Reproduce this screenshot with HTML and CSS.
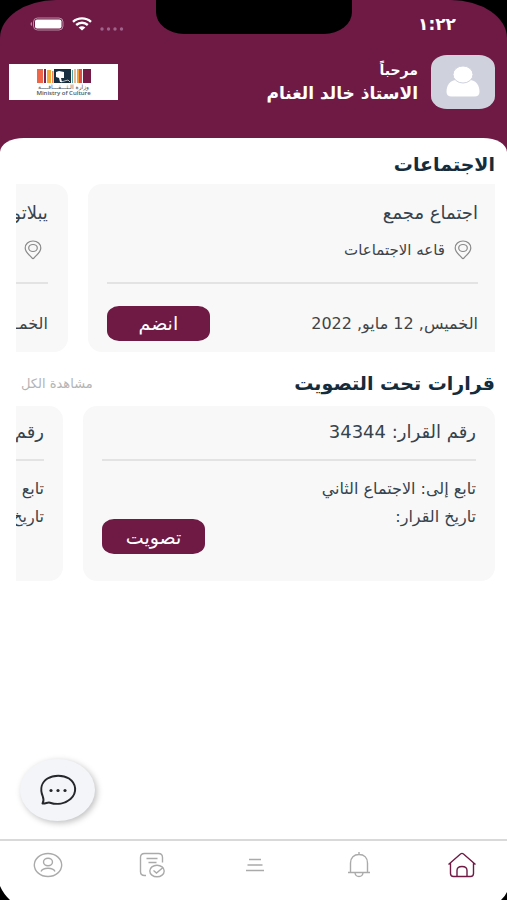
FILE: index.html
```html
<!DOCTYPE html>
<html lang="ar" dir="rtl">
<head>
<meta charset="utf-8">
<meta name="viewport" content="width=device-width, initial-scale=1">
<title>الاجتماعات</title>
<link rel="stylesheet" href="styles.css">
</head>
<body>
<div class="phone">
  <div class="notch"></div>
  <header class="top">
    <div class="status">
      <span class="time">١:٢٢</span>
      <span class="signals">
        <svg width="24" height="4" viewBox="0 0 24 4" fill="#a0648a"><circle cx="2" cy="2" r="1.700"/><circle cx="8.500" cy="2" r="1.700"/><circle cx="15" cy="2" r="1.700"/><circle cx="21.500" cy="2" r="1.700"/></svg>
        <svg width="20" height="14" viewBox="0 0 20 14" fill="none" stroke="#fff" stroke-width="2.4"><path d="M1 4.8C6 .2 14 .2 19 4.8M4.2 8c3.400-3 8.200-3 11.600 0"/><path d="M6.600 10.400c2-1.700 4.800-1.700 6.800 0L10 13.600z" fill="#fff" stroke="none"/></svg>
        <svg width="34" height="14" viewBox="0 0 34 14"><rect x="3.500" y="1" width="29.500" height="12" rx="4" fill="none" stroke="#b98aa2"/><rect x="5" y="2.500" width="26.500" height="9" rx="2" fill="#fff"/><path d="M2 5v4q-1.500-.5-1.500-2T2 5z" fill="#b98aa2"/></svg>
      </span>
    </div>
    <div class="profile">
      <svg class="avatar" width="64" height="54" viewBox="0 0 64 54" fill="#fff" role="img" aria-label="الصورة الشخصية"><path d="M15.500 37c0-7 3.500-12 10-12h13c6.500 0 10 5 10 12 0 3-2 4.500-5 4.500h-23c-3 0-5-1.500-5-4.500z"/><ellipse cx="32" cy="19.500" rx="10" ry="8.500" stroke="#cfd1dd"/></svg>
      <div class="greeting">
        <p>مرحباً</p>
        <p class="name">الاستاذ خالد الغنام</p>
      </div>
      <div class="logo">
        <svg width="54" height="14" viewBox="0 0 54 14" aria-hidden="true"><path fill="#ee6548" d="M0 0h6v14H0z"/><path fill="#7b2450" d="M7 0h2v14H7z"/><path fill="#f3a93b" d="M10 1h4v13h-4z"/><path fill="#e98955" d="M15 2h1.500v12H15z"/><path fill="#172f40" d="M17 0h17v14H17z"/><path fill="#fff" d="M19 3l3-1 5 1v6h-3l1 4h-2l-1-4-3-1z"/><path d="M24 13l7-2 2 2" stroke="#fff" stroke-width=".7" fill="none"/><path fill="#54a5a4" d="M35 1h1v13h-1z"/><path fill="#eab98f" d="M37 0h2v14h-2z"/><path fill="#f0a238" d="M40 0h2v14h-2z"/><path fill="#dc4e50" d="M42 0h3v14h-3z"/><path fill="#741b48" d="M46 0h8v14h-8z"/></svg>
        <span class="logo-ar">وزارة الـثـــقـــافــــة</span>
        <span class="logo-en" dir="ltr">Ministry of Culture</span>
      </div>
    </div>
  </header>

  <main class="sheet">
    <section>
      <div class="section-head"><h1>الاجتماعات</h1></div>
      <div class="strip">
        <article class="card meeting first">
          <h2>اجتماع مجمع</h2>
          <p class="place"><svg class="pin" width="18" height="20" viewBox="0 0 18 20"><path d="M9 1C4.500 1 1.200 4 1.200 8c0 4.500 4.500 7 6.800 10 .6.700 1.400.7 2 0 2.300-3 6.800-5.500 6.800-10 0-4-3.300-7-7.800-7z"/><ellipse cx="9" cy="8" rx="4.300" ry="3.500"/></svg>قاعه الاجتماعات</p>
          <hr>
          <div class="foot"><span>الخميس, 12 مايو, 2022</span><button type="button">انضم</button></div>
        </article>
        <article class="card meeting">
          <h2>يبلاتو</h2>
          <p class="place"><svg class="pin" width="18" height="20" viewBox="0 0 18 20"><path d="M9 1C4.500 1 1.200 4 1.200 8c0 4.500 4.500 7 6.800 10 .6.700 1.400.7 2 0 2.300-3 6.800-5.500 6.800-10 0-4-3.300-7-7.800-7z"/><ellipse cx="9" cy="8" rx="4.300" ry="3.500"/></svg></p>
          <hr>
          <div class="foot"><span>الخمـ</span></div>
        </article>
      </div>
    </section>
    <section>
      <div class="section-head votes-head"><h1>قرارات تحت التصويت</h1><a href="#all">مشاهدة الكل</a></div>
      <div class="strip">
        <article class="card vote">
          <h2>رقم القرار: 34344</h2>
          <hr>
          <p>تابع إلى: الاجتماع الثاني</p>
          <p>تاريخ القرار:</p>
          <button type="button">تصويت</button>
        </article>
        <article class="card vote">
          <h2>رقم</h2>
          <hr>
          <p>تابع</p>
          <p>تاريخ</p>
        </article>
      </div>
    </section>
    <button type="button" class="chat" aria-label="محادثة"><svg width="38" height="32" viewBox="0 0 38 32"><path d="M3.500 29.500c1.600-2.500 1.300-4.500.3-7C.5 14.500 3 8 8.500 4.500 14.500.7 24 .7 30 4.500c7.500 5 8.300 14.500 1.500 20.500-5.500 4.800-13.500 6-20.500 3.700-2.500-.8-4.500 1.300-7.500.8z" fill="none" stroke="#25272c" stroke-width="2" stroke-linejoin="round"/><g fill="#25272c"><circle cx="12" cy="16.500" r="1.600"/><circle cx="19" cy="16.500" r="1.600"/><circle cx="26" cy="16.500" r="1.600"/></g></svg></button>
  </main>

  <nav class="tabs">
    <a class="active" href="#home" aria-label="الرئيسية"><svg width="30" height="26" viewBox="0 0 30 26"><path d="M1.500 12.500L13.500 2q1.500-1.200 3 0l12 10.500M3.500 11v10.500q0 3 3 3h17q3 0 3-3V11M10 24.500v-6q0-4 5-4t5 4v6"/></svg></a>
    <a href="#alerts" aria-label="التنبيهات"><svg width="26" height="26" viewBox="0 0 26 26"><path d="M2 20.500h22M4.500 20.500V11C4.500 5.500 8 2.500 13 2.500s8.500 3 8.500 8.500v9.500M13 2.500V0M9 21c.3 2 2 3.500 4 3.500s3.700-1.500 4-3.500"/></svg></a>
    <a href="#menu" aria-label="القائمة"><svg width="20" height="14" viewBox="0 0 20 14"><path d="M4 1.500h12M2.500 7h15M1 12.500h18"/></svg></a>
    <a href="#tasks" aria-label="المهام"><svg width="28" height="26" viewBox="0 0 28 26"><path d="M8 23.500H6.500q-4 0-4-4V5.500q0-4 4-4h14q4 0 4 4v5M8.500 6.500h11M10.500 10.500h8"/><ellipse cx="19" cy="19" rx="7.200" ry="5.800"/><path d="M15.500 18.500l3 2.500 6.500-5.500"/></svg></a>
    <a href="#profile" aria-label="الحساب"><svg width="30" height="26" viewBox="0 0 30 26"><ellipse cx="15" cy="13" rx="13.700" ry="11.500"/><ellipse cx="15" cy="10" rx="4.500" ry="3.700"/><path d="M8 19.500c2-4.300 12-4.300 14 0"/></svg></a>
  </nav>
  <svg class="edge edge-start" width="6" height="8" viewBox="0 0 6 8"><path d="M6 0v8H0q4-3.500 6-8z"/></svg>
  <svg class="edge edge-end" width="10" height="14" viewBox="0 0 10 14"><path d="M0 0q3.500 8 10 14H0z"/></svg>
</div>
</body>
</html>
```
FILE: styles.css
```css
* { box-sizing: border-box; }
body {
  margin: 0;
  background: #000;
  font-family: "DejaVu Sans", "Noto Sans", sans-serif;
  color: #3f4448;
}
h1, h2, p { margin: 0; font-weight: 400; }
svg { display: block; flex: none; }
button { border: 0; padding: 0; font-family: inherit; cursor: pointer; }
a { text-decoration: none; }

.phone {
  position: relative;
  display: flex;
  flex-direction: column;
  min-height: 100vh;
  background: #6e1a45;
  border-radius: 56px 56px 0 0 / 38px 38px 0 0;
  overflow: hidden;
}
.notch {
  position: absolute;
  top: 0;
  left: 50%;
  width: 196px;
  height: 34px;
  transform: translateX(-50%);
  background: #000;
  border-radius: 0 0 28px 28px / 0 0 22px 22px;
}

.top { color: #fff; }
.status {
  display: flex;
  justify-content: space-between;
  align-items: center;
  height: 48px;
  padding: 0 51px 0 30px;
}
.time { font-size: 17px; font-weight: 700; }
.signals { display: flex; align-items: center; gap: 8px; }
.signals svg:first-child { align-self: flex-end; }
.profile {
  display: flex;
  align-items: center;
  height: 67px;
  margin-bottom: 23px;
  padding: 0 12px 0 9px;
}
.avatar { background: #cfd1dd; border-radius: 16px / 13px; }
.greeting { flex: 1; margin-right: 13px; font-size: 14px; line-height: 23px; }
.greeting p { font-weight: 700; }
.greeting .name { font-size: 17px; }
.logo {
  display: flex;
  flex-direction: column;
  align-items: center;
  width: 109px;
  height: 36px;
  padding-top: 5px;
  background: #fff;
  color: #4a5560;
}
.logo-ar { font-size: 6px; line-height: 7px; }
.logo-en { font-family: "Open Sans", sans-serif; font-size: 6px; line-height: 6px; font-weight: 600; }

.sheet {
  position: relative;
  flex: 1;
  background: #fff;
  border-radius: 24px 24px 0 0 / 14px 14px 0 0;
  padding: 5px 12px 0 16px;
}
.section-head {
  display: flex;
  justify-content: space-between;
  align-items: center;
  height: 41px;
}
.section-head h1 { font-size: 19px; font-weight: 700; color: #142c3c; }
.section-head a { margin-left: 5px; font-size: 13px; color: #b4b4b4; }
.votes-head { height: 54px; padding-top: 8px; }

.strip { display: flex; gap: 20px; overflow: hidden; }
.card {
  flex: none;
  width: 86%;
  background: #f8f8f8;
  border-radius: 14px;
}
.card h2 { font-size: 18px; line-height: 24px; color: #35434e; }
.card p { font-size: 16px; line-height: 28px; }
.card hr { height: 2px; margin: 0; border: 0; background: #e3e3e3; }
.card button {
  width: 103px;
  height: 35px;
  border-radius: 12px / 10px;
  background: #6e1a45;
  color: #fff;
  font-size: 19px;
}
.meeting { width: 85%; height: 168px; padding: 17px 20px 0 19px; }
.meeting.first { padding-right: 17px; border-top-right-radius: 0; border-bottom-right-radius: 0; }
.meeting .place {
  display: flex;
  align-items: center;
  gap: 9px;
  height: 28px;
  margin: 11px 0 18px;
  padding-right: 6px;
  font-size: 15px;
}
.pin { fill: none; stroke: #888; stroke-width: 1.2; }
.foot { display: flex; justify-content: space-between; align-items: center; height: 40px; margin-top: 19px; font-size: 16px; }
.vote { height: 175px; padding: 14px 19px 0; }
.vote hr { margin: 15px 0 14px; }
.vote p { color: #35434e; }
.vote button { display: block; margin: -12px auto 0 0; }

.chat {
  position: absolute;
  left: 20px;
  bottom: 18px;
  display: grid;
  place-items: center;
  width: 75px;
  height: 62px;
  border-radius: 50%;
  background: #f4f5f8;
  box-shadow: 2px 2px 6px rgba(0, 0, 0, .25);
}

.tabs {
  display: flex;
  justify-content: space-between;
  height: 61px;
  padding: 0 30px 12px 33px;
  background: #fff;
  border-top: 2px solid #d9d9d9;
}
.tabs a { display: grid; place-items: center; width: 30px; }
.tabs svg { fill: none; stroke: #aaa; stroke-width: 1.4; }
.tabs .active svg { stroke: #6e1a45; }

.edge { position: absolute; bottom: 0; fill: #000; }
.edge-start { right: 0; }
.edge-end { left: 0; }
```
